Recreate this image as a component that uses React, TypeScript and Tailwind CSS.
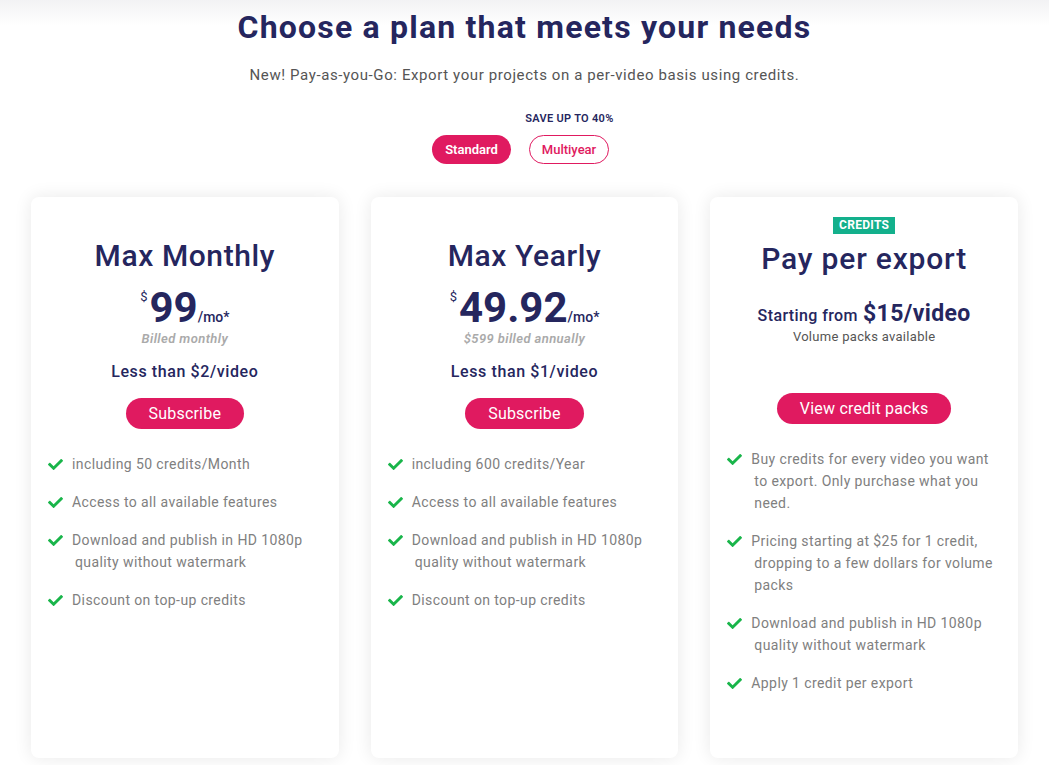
import { FaCheck } from 'react-icons/fa';

interface Plan {
    name: string;
    price: string;
    billed: string;
    perVideo: string;
    features: string[];
}

const navy = 'text-[#25265e]';

function Feature({ text }: { text: string }) {
    return (
        <li className="flex items-start gap-[9px]">
            <FaCheck className="mt-[4px] h-[15px] w-[15px] shrink-0 text-[#19b54a]" />
            <span className="pl-[3px] indent-[-3px] text-[14px] leading-[22px] tracking-[0.4px] text-[#808080]">
                {text}
            </span>
        </li>
    );
}

function Card({ children, features }: { children: React.ReactNode; features: string[] }) {
    return (
        <div className="flex flex-col rounded-[8px] bg-white shadow-[0_0_18px_rgba(0,0,0,0.09)]">
            {children}
            <ul className="flex flex-col gap-[16px] pt-[24px] pr-[22px] pb-[60px] pl-[17px]">
                {features.map((f) => (
                    <Feature key={f} text={f} />
                ))}
            </ul>
        </div>
    );
}

const plans: Plan[] = [
    {
        name: 'Max Monthly',
        price: '99',
        billed: 'Billed monthly',
        perVideo: 'Less than $2/video',
        features: [
            'including 50 credits/Month',
            'Access to all available features',
            'Download and publish in HD 1080p quality without watermark',
            'Discount on top-up credits',
        ],
    },
    {
        name: 'Max Yearly',
        price: '49.92',
        billed: '$599 billed annually',
        perVideo: 'Less than $1/video',
        features: [
            'including 600 credits/Year',
            'Access to all available features',
            'Download and publish in HD 1080p quality without watermark',
            'Discount on top-up credits',
        ],
    },
];

const credits = [
    'Buy credits for every video you want to export. Only purchase what you need.',
    'Pricing starting at $25 for 1 credit, dropping to a few dollars for volume packs',
    'Download and publish in HD 1080p quality without watermark',
    'Apply 1 credit per export',
];

function PinkButton({ label }: { label: string }) {
    return (
        <button className="h-[31px] rounded-full bg-[#e01a60] px-[23px] text-[16px] leading-none tracking-[0.2px] text-white">
            {label}
        </button>
    );
}

export default function App() {
    return (
        <div
            className="min-h-[765px] bg-[linear-gradient(to_bottom,#f2f2f4_0px,#ffffff_26px)] pb-[8px]"
            style={{ fontFamily: 'Roboto, "Noto Sans", sans-serif' }}
        >
            <div className="flex flex-col items-center pt-[7px]">
                <h1 className={`text-[32px] leading-[40px] font-bold tracking-[1.2px] ${navy}`}>
                    Choose a plan that meets your needs
                </h1>
                <p className="mt-[18px] text-[15px] leading-[20px] tracking-[0.6px] text-[#555]">
                    New! Pay-as-you-Go: Export your projects on a per-video basis using credits.
                </p>
                <div className="mt-[27px] flex flex-col items-center">
                    <span className={`ml-[90px] text-[11px] leading-[14px] font-semibold tracking-[0.3px] ${navy}`}>
                        SAVE UP TO 40%
                    </span>
                    <div className="mt-[9px] mr-[8px] flex gap-[18px]">
                        <button className="h-[29px] w-[79px] rounded-full bg-[#e01a60] text-[13px] font-semibold text-white">
                            Standard
                        </button>
                        <button className="h-[29px] w-[80px] rounded-full border border-[#e01a60] bg-white text-[13px] font-medium text-[#e01a60]">
                            Multiyear
                        </button>
                    </div>
                </div>
            </div>

            <div className="mx-[31px] mt-[33px] grid h-[561px] grid-cols-3 gap-[32px]">
                {plans.map((p) => (
                    <Card key={p.name} features={p.features}>
                        <div className="flex flex-col items-center pt-[40px]">
                            <h2 className={`text-[30px] leading-[38px] font-medium tracking-[0.6px] ${navy}`}>{p.name}</h2>
                            <div className={`mt-[11px] flex h-[44px] items-start ${navy}`}>
                                <span className="mt-[4px] mr-[2px] text-[13px] leading-none">$</span>
                                <span className="text-[42px] leading-[44px] font-bold">{p.price}</span>
                                <span className="mt-[22px] text-[14px] leading-[18px] font-medium">/mo*</span>
                            </div>
                            <span className="text-[13px] leading-[18px] font-semibold tracking-[0.4px] text-[#aaa] italic">
                                {p.billed}
                            </span>
                            <span className={`mt-[14px] text-[16px] leading-[20px] font-medium tracking-[0.6px] ${navy}`}>
                                {p.perVideo}
                            </span>
                            <div className="mt-[16px]">
                                <PinkButton label="Subscribe" />
                            </div>
                        </div>
                    </Card>
                ))}
                <Card features={credits}>
                    <div className="flex flex-col items-center pt-[20px]">
                        <span className="bg-[#13b08c] px-[6px] text-[12px] leading-[17px] font-bold tracking-[0.3px] text-white">
                            CREDITS
                        </span>
                        <h2 className={`mt-[6px] text-[30px] leading-[38px] font-medium tracking-[0.8px] ${navy}`}>
                            Pay per export
                        </h2>
                        <div className={`mt-[22px] flex h-[28px] items-baseline gap-[5px] ${navy}`}>
                            <span className="text-[16px] font-medium tracking-[0.4px]">Starting from</span>
                            <span className="text-[23px] leading-[28px] font-bold tracking-[0.4px]">$15/video</span>
                        </div>
                        <span className="text-[13px] leading-[18px] tracking-[0.3px] text-[#555]">Volume packs available</span>
                        <div className="mt-[47px]">
                            <PinkButton label="View credit packs" />
                        </div>
                    </div>
                </Card>
            </div>
        </div>
    );
}
